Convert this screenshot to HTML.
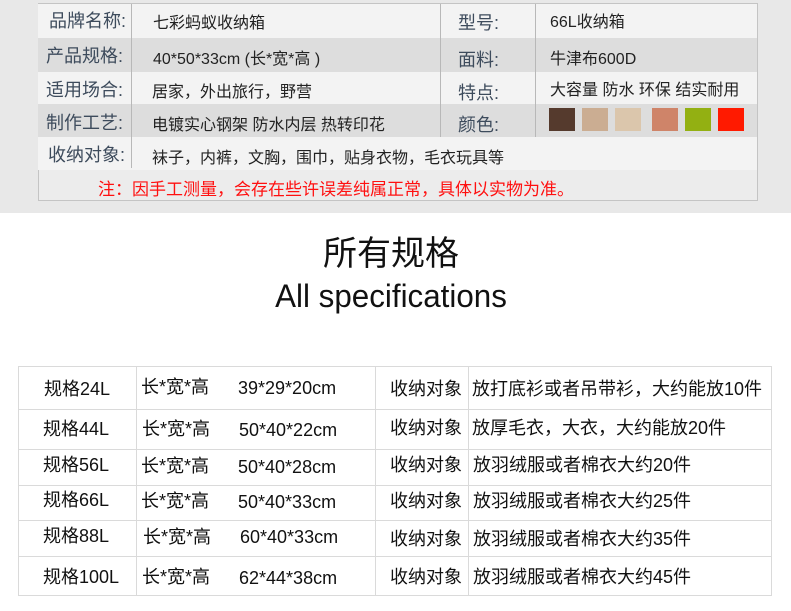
<!DOCTYPE html>
<html><head><meta charset="utf-8"><style>
body{margin:0;width:791px;height:611px;background:#fff;position:relative;overflow:hidden;font-family:"Liberation Sans","Noto Sans CJK SC",sans-serif;}
.a{position:absolute;white-space:nowrap;}
.top{position:absolute;left:0;top:0;width:791px;height:213px;background:#e8e8e8;}
.r{position:absolute;left:38px;width:719px;}
.lb{color:#3d4b5c;font-size:18px;}
.v{color:#222;font-size:16px;}
.sw{position:absolute;top:108px;width:26px;height:23px;}
.hl{position:absolute;background:#dadada;height:1px;left:18px;width:754px;}
.vl{position:absolute;background:#dadada;width:1px;top:366px;height:230px;}
.t{font-size:18px;color:#111;}
.d{margin-top:3px;}
</style></head><body>
<div class="top"></div>
<div class="a" style="left:38px;top:3px;width:718px;height:196px;border:1px solid #c4c4c4;background:#ececec"></div>
<div class="r" style="top:4px;height:34px;background:#f3f3f3"></div>
<div class="r" style="top:38px;height:34px;background:#dddddd"></div>
<div class="r" style="top:72px;height:32px;background:#f3f3f3"></div>
<div class="r" style="top:104px;height:33px;background:#dddddd"></div>
<div class="r" style="top:137px;height:33px;background:#f3f3f3"></div>
<div class="a" style="left:131px;top:4px;width:1px;height:164px;background:#b8b8b8"></div>
<div class="a" style="left:440px;top:4px;width:1px;height:133px;background:#b8b8b8"></div>
<div class="a" style="left:535px;top:4px;width:1px;height:133px;background:#b8b8b8"></div>
<div class="a lb" style="left:49px;top:7px">品牌名称:</div>
<div class="a lb" style="left:46px;top:42px">产品规格:</div>
<div class="a lb" style="left:46px;top:76px">适用场合:</div>
<div class="a lb" style="left:46px;top:109px">制作工艺:</div>
<div class="a lb" style="left:48px;top:141px">收纳对象:</div>
<div class="a v" style="left:153px;top:9px">七彩蚂蚁收纳箱</div>
<div class="a v" style="left:153px;top:45px">40*50*33cm (长*宽*高 )</div>
<div class="a v" style="left:152px;top:78px">居家，外出旅行，野营</div>
<div class="a v" style="left:152px;top:111px">电镀实心钢架 防水内层 热转印花</div>
<div class="a v" style="left:152px;top:144px">袜子，内裤，文胸，围巾，贴身衣物，毛衣玩具等</div>
<div class="a lb" style="left:458px;top:9px">型号:</div>
<div class="a lb" style="left:458px;top:46px">面料:</div>
<div class="a lb" style="left:458px;top:79px">特点:</div>
<div class="a lb" style="left:458px;top:111px">颜色:</div>
<div class="a v" style="left:550px;top:8px">66L收纳箱</div>
<div class="a v" style="left:550px;top:45px">牛津布600D</div>
<div class="a v" style="left:550px;top:76px">大容量 防水 环保 结实耐用</div>
<div class="sw" style="left:549px;background:#553a2d"></div>
<div class="sw" style="left:582px;background:#cbad92"></div>
<div class="sw" style="left:615px;background:#dbc6ac"></div>
<div class="sw" style="left:652px;background:#cf8469"></div>
<div class="sw" style="left:685px;background:#93b012"></div>
<div class="sw" style="left:718px;background:#ff1a00"></div>
<div class="a" style="left:98px;top:175px;color:#ff1010;font-size:17px">注：因手工测量，会存在些许误差纯属正常，具体以实物为准。</div>
<div class="a" style="left:0;width:782px;text-align:center;top:226px;font-size:34px;color:#111">所有规格</div>
<div class="a" style="left:0;width:782px;text-align:center;top:278px;font-size:32px;color:#111;transform:scaleX(0.98)">All specifications</div>
<div class="hl" style="top:366px"></div><div class="hl" style="top:409px"></div><div class="hl" style="top:449px"></div><div class="hl" style="top:485px"></div><div class="hl" style="top:520px"></div><div class="hl" style="top:556px"></div><div class="hl" style="top:595px"></div>
<div class="vl" style="left:18px"></div><div class="vl" style="left:136px"></div><div class="vl" style="left:375px"></div><div class="vl" style="left:468px"></div><div class="vl" style="left:771px"></div>
<div class="a t" style="left:44px;top:375px">规格24L</div><div class="a t" style="left:141px;top:373px">长*宽*高</div><div class="a t" style="left:238px;top:378px">39*29*20cm</div><div class="a t" style="left:390px;top:375px">收纳对象</div><div class="a t" style="left:472px;top:375px">放打底衫或者吊带衫，大约能放10件</div>
<div class="a t" style="left:43px;top:415px">规格44L</div><div class="a t" style="left:142px;top:415px">长*宽*高</div><div class="a t" style="left:239px;top:420px">50*40*22cm</div><div class="a t" style="left:390px;top:414px">收纳对象</div><div class="a t" style="left:472px;top:414px">放厚毛衣，大衣，大约能放20件</div>
<div class="a t" style="left:43px;top:451px">规格56L</div><div class="a t" style="left:141px;top:452px">长*宽*高</div><div class="a t" style="left:238px;top:457px">50*40*28cm</div><div class="a t" style="left:390px;top:451px">收纳对象</div><div class="a t" style="left:473px;top:451px">放羽绒服或者棉衣大约20件</div>
<div class="a t" style="left:43px;top:486px">规格66L</div><div class="a t" style="left:141px;top:487px">长*宽*高</div><div class="a t" style="left:238px;top:492px">50*40*33cm</div><div class="a t" style="left:390px;top:487px">收纳对象</div><div class="a t" style="left:473px;top:487px">放羽绒服或者棉衣大约25件</div>
<div class="a t" style="left:43px;top:522px">规格88L</div><div class="a t" style="left:143px;top:523px">长*宽*高</div><div class="a t" style="left:240px;top:527px">60*40*33cm</div><div class="a t" style="left:390px;top:525px">收纳对象</div><div class="a t" style="left:473px;top:525px">放羽绒服或者棉衣大约35件</div>
<div class="a t" style="left:43px;top:563px">规格100L</div><div class="a t" style="left:142px;top:563px">长*宽*高</div><div class="a t" style="left:239px;top:568px">62*44*38cm</div><div class="a t" style="left:390px;top:563px">收纳对象</div><div class="a t" style="left:473px;top:563px">放羽绒服或者棉衣大约45件</div>
</body></html>
